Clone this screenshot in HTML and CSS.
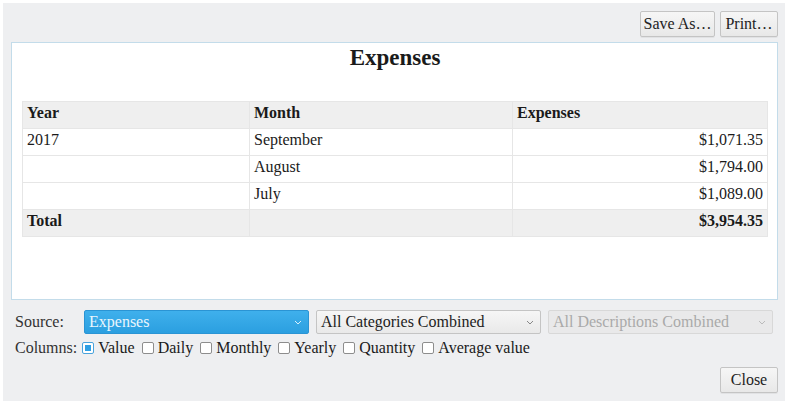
FILE: index.html
```html
<!DOCTYPE html>
<html>
<head>
<meta charset="utf-8">
<link rel="stylesheet" href="styles.css">
</head>
<body>
<div class="window">
  <div class="toolbar">
    <button class="btn save">Save As…</button>
    <button class="btn print">Print…</button>
  </div>
  <div class="panel">
    <h1 class="title">Expenses</h1>
    <table class="report">
      <thead>
        <tr><th class="c1">Year</th><th class="c2">Month</th><th class="c3">Expenses</th></tr>
      </thead>
      <tbody>
        <tr><td>2017</td><td>September</td><td class="num">$1,071.35</td></tr>
        <tr><td></td><td>August</td><td class="num">$1,794.00</td></tr>
        <tr><td></td><td>July</td><td class="num">$1,089.00</td></tr>
        <tr class="total"><td>Total</td><td></td><td class="num">$3,954.35</td></tr>
      </tbody>
    </table>
  </div>
  <div class="controls">
    <div class="row">
      <span class="label">Source:</span>
      <div class="select active"><span>Expenses</span><svg class="chev" viewBox="0 0 8 5" width="8" height="5"><path d="M1 1 L4 4 L7 1" fill="none" stroke="currentColor" stroke-width="1"/></svg></div>
      <div class="select"><span>All Categories Combined</span><svg class="chev" viewBox="0 0 8 5" width="8" height="5"><path d="M1 1 L4 4 L7 1" fill="none" stroke="currentColor" stroke-width="1"/></svg></div>
      <div class="select disabled"><span>All Descriptions Combined</span><svg class="chev" viewBox="0 0 8 5" width="8" height="5"><path d="M1 1 L4 4 L7 1" fill="none" stroke="currentColor" stroke-width="1"/></svg></div>
    </div>
    <div class="row cols">
      <span class="label2">Columns:</span>
      <label class="chk"><span class="box checked"></span>Value</label>
      <label class="chk"><span class="box"></span>Daily</label>
      <label class="chk"><span class="box"></span>Monthly</label>
      <label class="chk"><span class="box"></span>Yearly</label>
      <label class="chk"><span class="box"></span>Quantity</label>
      <label class="chk"><span class="box"></span>Average value</label>
    </div>
    <div class="footer">
      <button class="btn close">Close</button>
    </div>
  </div>
</div>
</body>
</html>
```
FILE: styles.css
```css
html, body {
  margin: 0;
  padding: 0;
  background: #ffffff;
}
body {
  font-family: "Liberation Serif", "Times New Roman", serif;
  font-size: 16px;
  color: #1a1a1a;
}
.window {
  margin: 3px 0 0 3px;
  width: 782px;
  height: 398px;
  background: #eeeff1;
  box-sizing: border-box;
  padding: 8px 7px 0 8px;
}
.toolbar {
  display: flex;
  justify-content: flex-end;
  gap: 5px;
  height: 26px;
}
.btn {
  font-family: inherit;
  font-size: 16px;
  color: #222;
  background: linear-gradient(#f6f6f6, #e8e8e8);
  border: 1px solid #c4c4c4;
  border-radius: 2px;
  height: 26px;
  padding: 0;
  box-shadow: 0 1px 0 rgba(0,0,0,0.05);
}
.save { width: 75px; }
.print { width: 58px; }
.close { width: 58px; height: 26px; }
.panel {
  margin-top: 5px;
  height: 258px;
  box-sizing: border-box;
  background: #ffffff;
  border: 1px solid #c3dcea;
  padding: 0 9px 0 10px;
}
.title {
  margin: 2px 0 0 0;
  text-align: center;
  font-size: 23px;
  font-weight: bold;
  line-height: 26px;
  height: 56px;
}
.report {
  width: 100%;
  border-collapse: collapse;
  font-size: 16px;
}
.report th, .report td {
  height: 26px;
  padding: 0 4px;
  border: 1px solid #e6e6e6;
  text-align: left;
  vertical-align: top;
  line-height: 22px;
}
.report th {
  background: #efefef;
  font-weight: bold;
}
.report .c1 { width: 218px; }
.report .c2 { width: 254px; }
.report td.num { text-align: right; }
.report tr.total td {
  background: #efefef;
  font-weight: bold;
}
.controls {
  padding: 10px 0 0 4px;
}
.row {
  display: flex;
  align-items: center;
  gap: 7px;
  height: 24px;
}
.label {
  width: 62px;
  color: #333;
}
.select {
  width: 225px;
  flex: none;
  height: 24px;
  box-sizing: border-box;
  border: 1px solid #c4c4c4;
  border-radius: 2px;
  background: linear-gradient(#f6f6f6, #e9e9e9);
  display: flex;
  align-items: center;
  justify-content: space-between;
  padding: 0 6px 0 4px;
  color: #222;
}
.select .chev { color: #888; }
.select.active {
  background: linear-gradient(#3fb0ec, #2b9fe0);
  border-color: #2a94d4;
  color: #eaf6fd;
}
.select.active .chev { color: #d8effc; }
.select.disabled {
  color: #a9a9a9;
  background: #e9e9ea;
  border-color: #d8d8d8;
}
.select.disabled .chev { color: #bbb; }
.cols {
  margin-top: 2px;
  gap: 7px;
}
.label2 { color: #333; margin-right: -2px; }
.chk {
  display: flex;
  align-items: center;
  gap: 4px;
}
.box {
  width: 10px;
  height: 10px;
  border: 1px solid #8d8d8d;
  border-radius: 2px;
  background: #fff;
}
.box.checked {
  border-color: #4aa3dc;
  position: relative;
}
.box.checked::after {
  content: "";
  position: absolute;
  left: 2px;
  top: 2px;
  width: 6px;
  height: 6px;
  background: #2e9fe4;
}
.footer {
  display: flex;
  justify-content: flex-end;
  margin-top: 7px;
  padding-right: 0;
}
```
